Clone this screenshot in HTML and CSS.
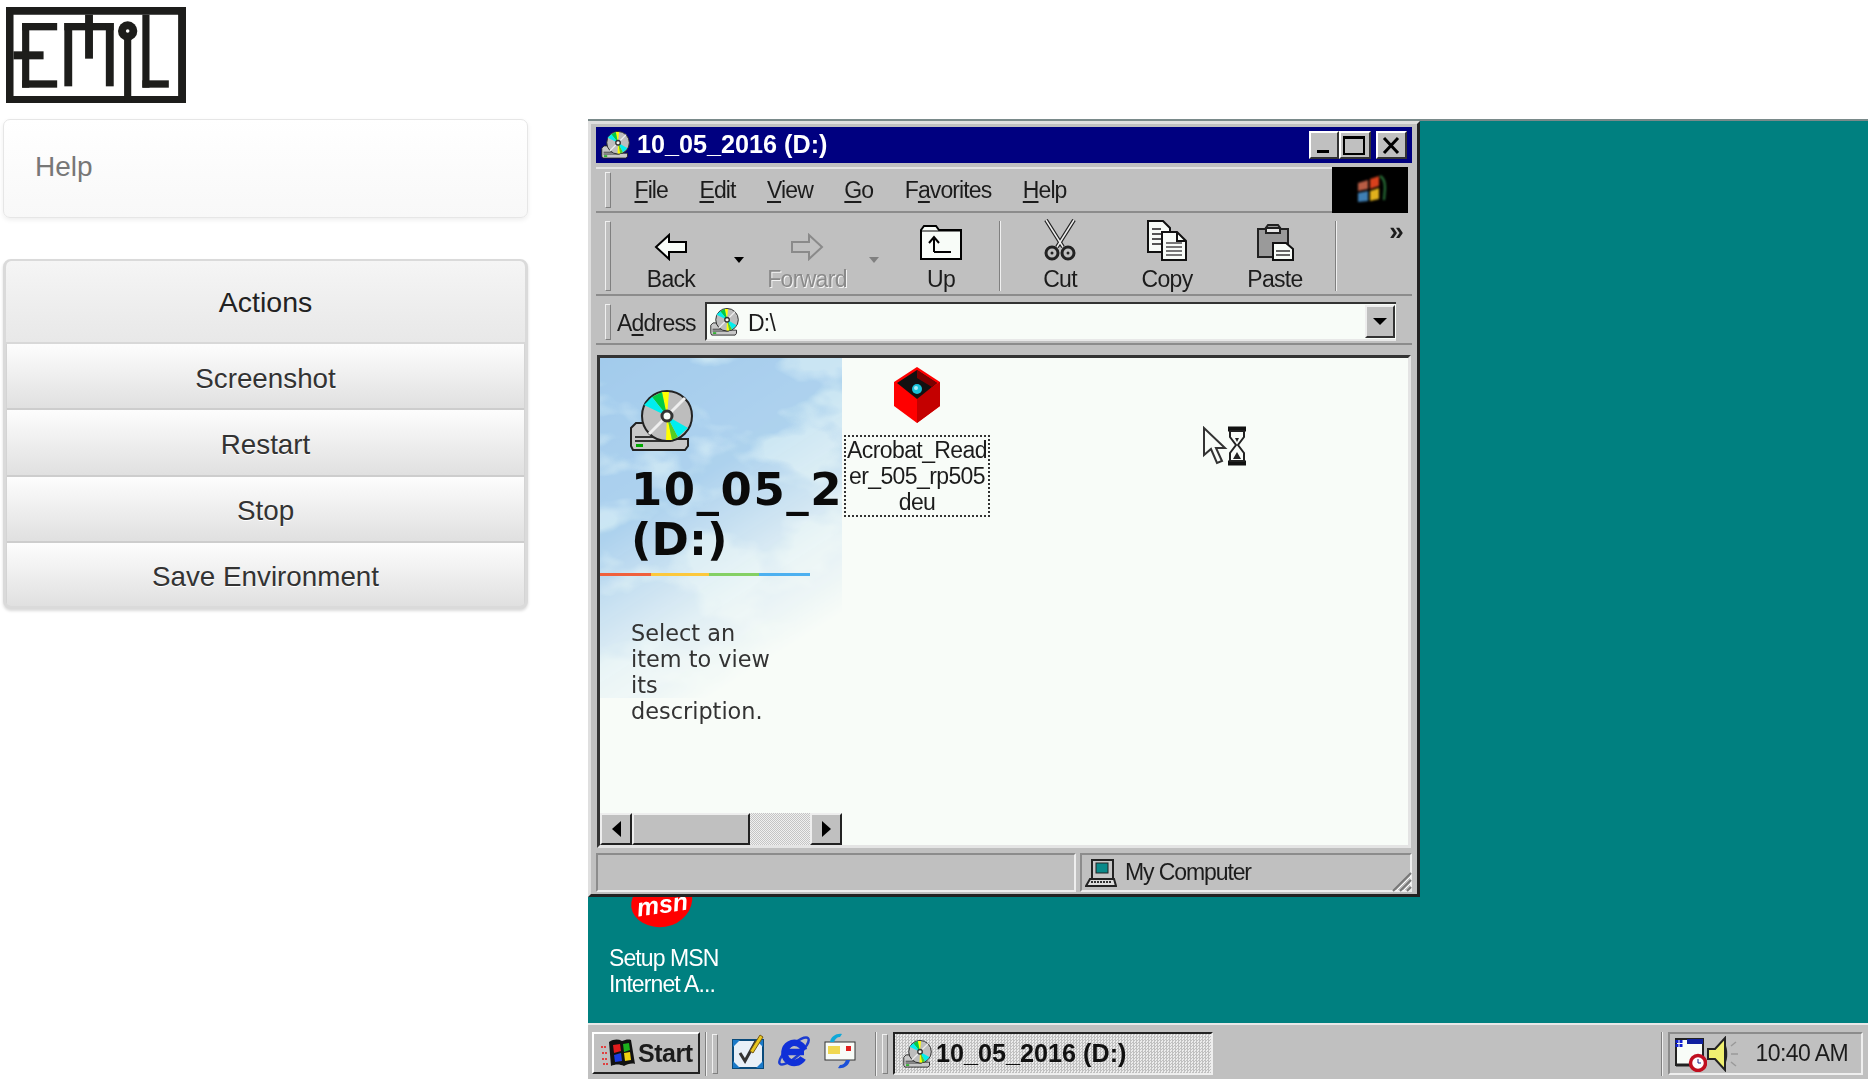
FILE: index.html
```html
<!DOCTYPE html>
<html lang="en">
<head>
    <meta charset="UTF-8">
    <title>EMIL</title>
    <link rel="stylesheet" href="styles.css">
</head>
<body>
    <!-- shared icons -->
    <svg class="defs" width="0" height="0">
        <symbol id="cd-drive" viewBox="0 0 65 62">
            <path d="M6 33h20l20 16h12v7l-3 4H3l-2-4V38z" fill="#c8c8c8" stroke="#222" stroke-width="2"/>
            <path d="M5 47h28M5 51h36" stroke="#333" stroke-width="2"/>
            <rect x="6" y="54" width="7" height="3" fill="#0a0"/>
            <circle cx="37" cy="26" r="25" fill="#bdbdbd" stroke="#222" stroke-width="2"/>
            <path d="M37 26L32 2h7z" fill="#ff0"/>
            <path d="M37 26L22 7l10-5z" fill="#0c4"/>
            <path d="M37 26L14 15l8-8z" fill="#0ee"/>
            <path d="M37 26l5 24h-6z" fill="#ff0"/>
            <path d="M37 26l11 21-6 3z" fill="#5c2"/>
            <path d="M37 26l21 12-10 9z" fill="#0ee"/>
            <path d="M37 26L55 8M37 26L19 44" stroke="#eee" stroke-width="3"/>
            <circle cx="37" cy="26" r="5" fill="#f8fcf8" stroke="#333" stroke-width="3"/>
        </symbol>
    </svg>

    <div class="sidebar">
        <svg class="logo" viewBox="17 20 503 288" preserveAspectRatio="none" fill="#1d1d1b">
            <path fill-rule="evenodd" d="M17 20h503v288H17zM38 43v244h460V43z"/>
            <!-- E -->
            <rect x="62" y="68" width="20" height="194"/>
            <rect x="62" y="68" width="98" height="22"/>
            <rect x="62" y="240" width="98" height="22"/>
            <rect x="38" y="153" width="84" height="24"/>
            <!-- M -->
            <rect x="180" y="68" width="22" height="190"/>
            <rect x="180" y="68" width="138" height="22"/>
            <rect x="238" y="43" width="22" height="132"/>
            <rect x="296" y="68" width="22" height="190"/>
            <!-- I -->
            <rect x="347" y="100" width="20" height="208"/>
            <ellipse cx="357" cy="92" rx="27" ry="29"/>
            <ellipse cx="357" cy="92" rx="5" ry="5" fill="#fff"/>
            <!-- L -->
            <rect x="398" y="43" width="20" height="219"/>
            <rect x="398" y="240" width="74" height="22"/>
        </svg>

        <div class="help-panel">Help</div>

        <div class="actions">
            <div class="actions-title">Actions</div>
            <button class="action-btn">Screenshot</button>
            <button class="action-btn">Restart</button>
            <button class="action-btn">Stop</button>
            <button class="action-btn">Save Environment</button>
        </div>
    </div>

    <div class="screen">
        <div class="desktop">
            <!-- desktop icon, half hidden by the window -->
            <div class="msn-icon">
                <div class="msn-blob">msn</div>
                <div class="msn-label">Setup MSN<br>Internet A...</div>
            </div>

            <div class="window">
                <div class="titlebar">
                    <svg class="title-icon"><use href="#cd-drive"/></svg>
                    <span class="title-text">10_05_2016 (D:)</span>
                    <div class="title-buttons">
                        <div class="win-btn">
                            <svg width="26" height="23"><rect x="6" y="16" width="12" height="3" fill="#000"/></svg>
                        </div>
                        <div class="win-btn">
                            <svg width="28" height="23"><rect x="3" y="3" width="20" height="17" fill="none" stroke="#000" stroke-width="2"/><rect x="3" y="2" width="20" height="3" fill="#000"/></svg>
                        </div>
                        <div class="win-btn win-close">
                            <svg width="27" height="23"><path d="M6 4l14 15M20 4L6 19" stroke="#000" stroke-width="3"/></svg>
                        </div>
                    </div>
                </div>

                <div class="menubar">
                    <div class="menu-items">
                        <div class="grip"></div>
                        <span class="menu-first"><u>F</u>ile</span>
                        <span><u>E</u>dit</span>
                        <span><u>V</u>iew</span>
                        <span><u>G</u>o</span>
                        <span>F<u>a</u>vorites</span>
                        <span><u>H</u>elp</span>
                    </div>
                    <div class="throbber">
                        <svg width="36" height="32" viewBox="0 0 36 32">
                            <path d="M6 9l10-3v9l-10 2z" fill="#b85c44"/>
                            <path d="M18 5l9-3v10l-9 3z" fill="#d8401c"/>
                            <path d="M6 19l10-2v10l-10 1z" fill="#3f7fb4"/>
                            <path d="M18 17l9-3v11l-9 2z" fill="#e0b01c"/>
                            <path d="M28 2c4 2 5 6 5 12l-1 12" fill="none" stroke="#2c7a3c" stroke-width="2"/>
                        </svg>
                    </div>
                </div>

                <div class="toolbar">
                    <div class="grip"></div>
                    <div class="tool tool-back">
                        <svg class="tool-icon" width="34" height="28" viewBox="0 0 34 28"><path d="M2 14L15 2v7h17v10H15v7z" fill="#f8fcf8" stroke="#000" stroke-width="2"/></svg>
                        <span>Back</span>
                    </div>
                    <div class="tool-drop"><i></i></div>
                    <div class="tool tool-forward tool-off">
                        <svg class="tool-icon" width="34" height="28" viewBox="0 0 34 28"><path d="M32 14L19 2v7H2v10h17v7z" fill="#c0c0c0" stroke="#8a8a8a" stroke-width="2"/></svg>
                        <span>Forward</span>
                    </div>
                    <div class="tool-drop tool-drop-off"><i></i></div>
                    <div class="tool tool-up">
                        <svg class="tool-icon" width="42" height="36" viewBox="0 0 42 36"><path d="M1 35V6l3-4h12l3 4h22v29z" fill="#f8fcf8" stroke="#000" stroke-width="2"/><path d="M1 7h40" stroke="#000"/><path d="M14 28V15M14 28h17M9 19l5-6 5 6" fill="none" stroke="#000" stroke-width="2"/></svg>
                        <span>Up</span>
                    </div>
                    <div class="tool-sep"></div>
                    <div class="tool tool-cut">
                        <svg class="tool-icon" width="34" height="42" viewBox="0 0 34 42"><path d="M3 1l17 27M31 1L14 28" fill="none" stroke="#222" stroke-width="4"/><path d="M3 1l17 27M31 1L14 28" fill="none" stroke="#eee" stroke-width="1.5"/><circle cx="9" cy="34" r="6" fill="none" stroke="#222" stroke-width="3"/><circle cx="25" cy="34" r="6" fill="none" stroke="#222" stroke-width="3"/><circle cx="9" cy="34" r="1.5" fill="#222"/><circle cx="25" cy="34" r="1.5" fill="#222"/></svg>
                        <span>Cut</span>
                    </div>
                    <div class="tool tool-copy">
                        <svg class="tool-icon" width="42" height="42" viewBox="0 0 42 42"><path d="M2 2h15l7 7v24H2z" fill="#f8fcf8" stroke="#111" stroke-width="2"/><path d="M6 10h9M6 15h9M6 20h9M6 25h9" stroke="#555" stroke-width="2"/><path d="M16 13h15l9 9v19H16z" fill="#f8fcf8" stroke="#111" stroke-width="2"/><path d="M31 13v9h9" fill="none" stroke="#111" stroke-width="2"/><path d="M20 24h16M20 28h16M20 32h16M20 36h16" stroke="#777" stroke-width="2"/></svg>
                        <span>Copy</span>
                    </div>
                    <div class="tool tool-paste">
                        <svg class="tool-icon" width="40" height="38" viewBox="0 0 40 38"><path d="M3 6h7l3-4h10l3 4h7v28H3z" fill="#9a9a9a" stroke="#222" stroke-width="2"/><path d="M11 5h14v5H11z" fill="#e8e8e8" stroke="#222" stroke-width="2"/><path d="M18 20h13l7 6v11H18z" fill="#f8fcf8" stroke="#111" stroke-width="2"/><path d="M21 28h14M21 32h14" stroke="#666" stroke-width="2"/></svg>
                        <span>Paste</span>
                    </div>
                    <div class="tool-sep"></div>
                    <div class="tool-more">&raquo;</div>
                </div>

                <div class="addressbar">
                    <div class="grip"></div>
                    <span class="address-label">A<u>d</u>dress</span>
                    <div class="address-field">
                        <svg class="address-icon"><use href="#cd-drive"/></svg>
                        <span class="address-text">D:\</span>
                        <div class="address-drop"><i></i></div>
                    </div>
                </div>

                <div class="content">
                    <div class="webview">
                        <svg class="sky" width="242" height="340">
                            <defs>
                                <filter id="clouds" x="0" y="0" width="100%" height="100%">
                                    <feTurbulence type="fractalNoise" baseFrequency=".011 .017" numOctaves="4" seed="8"/>
                                    <feColorMatrix values="0 0 0 0 .36  0 0 0 0 .6  0 0 0 0 .84  6 0 0 0 -2.1"/>
                                </filter>
                                <linearGradient id="sky-fade" x1="0" y1="0" x2=".45" y2="1">
                                    <stop offset="0" stop-color="#fff"/>
                                    <stop offset=".45" stop-color="#ddd"/>
                                    <stop offset=".78" stop-color="#444"/>
                                    <stop offset="1" stop-color="#000"/>
                                </linearGradient>
                                <mask id="sky-mask"><rect width="242" height="340" fill="url(#sky-fade)"/></mask>
                            </defs>
                            <g mask="url(#sky-mask)">
                                <rect width="242" height="340" fill="#c4e2f2"/>
                                <rect width="242" height="340" filter="url(#clouds)"/>
                            </g>
                        </svg>
                        <div class="webview-body">
                            <svg class="drive-big"><use href="#cd-drive"/></svg>
                            <div class="drive-name"><span class="drive-label">10_05_2016</span><br>(D:)</div>
                            <div class="rainbow"><i></i><i></i><i></i><i></i></div>
                            <p class="drive-hint">Select an<br>item to view<br>its<br>description.</p>
                        </div>
                        <div class="scrollbar">
                            <div class="sb-btn"><svg width="12" height="18"><path d="M11 1v16L2 9z" fill="#000"/></svg></div>
                            <div class="sb-thumb"></div>
                            <div class="sb-track"></div>
                            <div class="sb-btn"><svg width="12" height="18"><path d="M2 1v16l9-8z" fill="#000"/></svg></div>
                        </div>
                    </div>
                    <div class="files">
                        <div class="file-item">
                            <svg width="48" height="56" viewBox="0 0 48 56">
                                <path d="M24 0l23 15v24L24 56 1 39V15z" fill="#f00"/>
                                <path d="M24 56l23-17V15L24 30z" fill="#c40000"/>
                                <path d="M24 3l20 13-20 16L4 16z" fill="#111"/>
                                <path d="M24 3l20 13-5 4-15-9z" fill="#7a0000"/>
                                <circle cx="24" cy="22" r="5" fill="#18c0d8"/>
                                <circle cx="23" cy="21" r="2" fill="#a8f0f8"/>
                            </svg>
                            <div class="file-label">Acrobat_Read<br>er_505_rp505<br>deu</div>
                        </div>
                        <!-- mouse pointer of the emulated machine -->
                        <svg class="pointer" width="46" height="40" viewBox="0 0 46 40">
                            <path d="M2 2v27l7-6 6 14 5-2-6-13h9z" fill="#f8fcf8" stroke="#333" stroke-width="2"/>
                            <path d="M26 3h18M26 37h18" stroke="#111" stroke-width="5"/>
                            <path d="M28 5v6l6 8-6 8v8h14v-8l-6-8 6-8V5z" fill="#f8fcf8" stroke="#222" stroke-width="2"/>
                            <path d="M31 33l4-7 4 7zM33 12h4l-2 4z" fill="#222"/>
                        </svg>
                    </div>
                </div>

                <div class="statusbar">
                    <div class="status-cell status-main"></div>
                    <div class="status-cell status-zone">
                        <svg width="32" height="28" viewBox="0 0 32 28">
                            <path d="M7 1h21v19H7z" fill="#c8c8c8" stroke="#222" stroke-width="2"/>
                            <rect x="11" y="4" width="12" height="10" fill="#0a8a8a" stroke="#222"/>
                            <path d="M5 20h24l2 7H1z" fill="#ddd" stroke="#222" stroke-width="2"/>
                            <path d="M6 23h20" stroke="#333" stroke-width="2" stroke-dasharray="2 1"/>
                        </svg>
                        <span>My Computer</span>
                        <svg class="resize-grip" width="22" height="22"><path d="M21 3L3 21M21 10L10 21M21 17l-4 4" stroke="#777" stroke-width="2"/><path d="M21 6L6 21M21 13l-8 8" stroke="#fff"/></svg>
                    </div>
                </div>
            </div>
        </div>

        <div class="taskbar">
            <div class="start-btn">
                <svg width="34" height="30" viewBox="0 0 34 30">
                    <path d="M8 4c5-3 9-3 13-1 3-1 6-2 9-1l4 24c-3-1-8 0-11 2-4-2-9-2-13 0z" fill="#111"/>
                    <path d="M12 7l7-1 1 7-7 2z" fill="#e01c1c"/>
                    <path d="M22 6l6-1 1 7-6 2z" fill="#1cb01c"/>
                    <path d="M13 17l7-2 1 8-7 1z" fill="#1c3ce0"/>
                    <path d="M23 15l6-1 1 8-6 1z" fill="#f0d010"/>
                    <path d="M0 9h6M1 15h6M1 21h6M2 26h6" stroke="#e04040" stroke-width="2" stroke-dasharray="2 1"/>
                </svg>
                <span>Start</span>
            </div>
            <div class="bar-sep"></div>
            <div class="bar-grip"></div>
            <div class="quick">
                <svg width="32" height="36" viewBox="0 0 32 36">
                    <rect x="1" y="7" width="30" height="28" fill="#e8f0f8" stroke="#0a4a7a" stroke-width="2"/>
                    <path d="M1 7l7 0-7 7zM31 35h-7l7-7zM1 35v-7l7 7zM31 7v7l-7-7z" fill="#1c7ac8"/>
                    <path d="M8 20l5 8L24 8" fill="none" stroke="#333" stroke-width="3"/>
                    <path d="M18 18L28 2l3 2-10 16z" fill="#e8c820" stroke="#7a5a10"/>
                </svg>
                <svg width="34" height="38" viewBox="0 0 34 38">
                    <ellipse cx="17" cy="19" rx="19" ry="6" transform="rotate(-42 17 19)" fill="none" stroke="#1c3cd0" stroke-width="2.5"/>
                    <path d="M8 20h19M26 26a10 10 0 1 1 1-8" fill="none" stroke="#1030d8" stroke-width="6.5"/>
                </svg>
                <svg width="32" height="38" viewBox="0 0 32 38">
                    <rect x="1" y="10" width="30" height="18" fill="#f8fcf8" stroke="#333"/>
                    <path d="M4 14h12v8H4z" fill="#f0d850"/>
                    <rect x="22" y="14" width="5" height="5" fill="#e02020"/>
                    <path d="M6 10c1-6 7-9 12-8l-2 3c-3 0-5 2-6 5z" fill="#10a8d8"/>
                    <path d="M26 28c-1 6-7 9-12 8l2-3c3 0 5-2 6-5z" fill="#1c50d8"/>
                </svg>
            </div>
            <div class="bar-sep"></div>
            <div class="bar-grip"></div>
            <div class="task-btn">
                <svg class="task-icon"><use href="#cd-drive"/></svg>
                <span>10_05_2016 (D:)</span>
            </div>
            <div class="tray-sep"></div>
            <div class="tray">
                <svg width="32" height="36" viewBox="0 0 32 36">
                    <rect x="1" y="3" width="27" height="26" fill="#f8fcf8" stroke="#222" stroke-width="2"/>
                    <path d="M12 3h16v5H12z" fill="#1020a0"/>
                    <path d="M2 4v8M6 4v8" stroke="#1020d0" stroke-width="3" stroke-dasharray="3 1"/>
                    <path d="M1 29h14" stroke="#222" stroke-width="3"/>
                    <circle cx="23" cy="27" r="7.5" fill="#fff" stroke="#c01020" stroke-width="3.5"/>
                    <path d="M23 23v4h3" fill="none" stroke="#10208a"/>
                </svg>
                <svg width="32" height="36" viewBox="0 0 32 36">
                    <path d="M1 13h7L18 2v32L8 23H1z" fill="#f0f070" stroke="#222" stroke-width="2"/>
                    <path d="M18 8c3 4 3 16 0 20z" fill="#222"/>
                    <path d="M24 10l5-4M24 18h7M24 26l5 4" stroke="#999" stroke-width="1.5"/>
                </svg>
                <span class="clock">10:40 AM</span>
            </div>
        </div>
    </div>
</body>
</html>
```

FILE: styles.css
```css
html, body {
    margin: 0;
    height: 1083px;
    overflow: hidden;
}
body {
    display: flex;
    font-family: 'Liberation Sans', Arial, sans-serif;
    background: #fff;
    color: #333;
}
.defs {
    position: absolute;
}

/* left column */
.sidebar {
    flex: 0 0 588px;
    box-sizing: border-box;
    padding: 7px 0 0 3px;
}
.logo {
    display: block;
    width: 180px;
    height: 96px;
    margin-left: 3px;
}
.help-panel {
    box-sizing: border-box;
    width: 525px;
    height: 99px;
    margin-top: 16px;
    padding-left: 31px;
    border: 1px solid #e6e6e6;
    border-radius: 7px;
    background: linear-gradient(#fff, #f8f8f8);
    box-shadow: 0 2px 5px rgba(0, 0, 0, 0.07);
    font-size: 28px;
    line-height: 93px;
    color: #777;
}
.actions {
    box-sizing: border-box;
    width: 525px;
    margin-top: 41px;
    border: 3px solid #dadada;
    border-top-width: 2px;
    border-radius: 8px;
    overflow: hidden;
    display: flex;
    flex-direction: column;
    background: #d4d4d4;
    box-shadow: 0 2px 3px rgba(0, 0, 0, 0.15);
}
.actions-title {
    height: 81px;
    line-height: 82px;
    text-align: center;
    font-size: 28.5px;
    color: #222;
    background: linear-gradient(#f5f5f5, #e8e8e8);
    border-bottom: 2px solid #d8d8d8;
}
.action-btn {
    height: 66.25px;
    margin: 0 1px;
    padding: 5px 0 0;
    border: none;
    border-bottom: 2px solid #cdcdcd;
    background: linear-gradient(#fdfdfd, #e0e0e0);
    font-family: 'Liberation Sans', Arial, sans-serif;
    font-size: 27.8px;
    color: #333;
    text-shadow: 0 1px 0 #fff;
}
.action-btn:last-child {
    height: 63px;
    border-bottom: none;
}

/* emulator screen, 1280x960 */
.screen {
    flex: 0 0 1280px;
    height: 960px;
    margin-top: 119px;
    border-top: 2px solid #7a8a8a;
    box-sizing: border-box;
    display: flex;
    flex-direction: column;
    background: #008080;
    filter: blur(0.55px);
    color: #1c1c1c;
}
.desktop {
    flex: 1;
    position: relative;
}
.msn-icon {
    position: absolute;
    left: 21px;
    top: 740px;
    width: 120px;
}
.msn-blob {
    position: absolute;
    left: 22px;
    top: 18px;
    width: 62px;
    height: 48px;
    border-radius: 55% 45% 50% 50% / 50% 40% 60% 50%;
    background: #f00;
    color: #fff;
    font-weight: bold;
    font-style: italic;
    font-size: 25px;
    line-height: 50px;
    text-align: center;
    transform: rotate(-8deg);
}
.msn-label {
    position: absolute;
    top: 84px;
    left: 0;
    white-space: nowrap;
    font-size: 23px;
    line-height: 26px;
    letter-spacing: -0.9px;
    color: #fff;
}

/* window */
.window {
    position: absolute;
    left: 0;
    top: 0;
    width: 832px;
    height: 776px;
    box-sizing: border-box;
    padding: 3px 5px 2px;
    display: flex;
    flex-direction: column;
    background: #c0c0c0;
    border: 3px solid;
    border-color: #dfdfdf #222 #222 #dfdfdf;
}
.titlebar {
    height: 36px;
    flex: none;
    display: flex;
    align-items: center;
    padding: 0 5px 0 5px;
    background: #000080;
    color: #fff;
}
.title-icon {
    width: 30px;
    height: 28px;
    margin-right: 6px;
}
.title-text {
    margin-top: -2px;
    font-size: 25.2px;
    font-weight: bold;
}
.title-buttons {
    margin-left: auto;
    display: flex;
}
.win-btn {
    box-sizing: border-box;
    height: 28px;
    display: flex;
    align-items: center;
    justify-content: center;
    background: #c0c0c0;
    border: 2px solid;
    border-color: #fff #333 #333 #fff;
}
.win-btn svg {
    display: block;
}
.win-close {
    margin-left: 5px;
}

.menubar {
    height: 46px;
    flex: none;
    margin-top: 4px;
    display: flex;
    font-size: 23px;
    letter-spacing: -0.9px;
}
.menu-items {
    flex: 1;
    display: flex;
    align-items: center;
    gap: 31.5px;
    border-top: 2px solid #e4e4e4;
    border-bottom: 2px solid #8c8c8c;
}
.menu-items span.menu-first {
    margin-left: -8px;
}
.grip {
    flex: none;
    width: 4px;
    height: 34px;
    margin-left: 9px;
    background: #c0c0c0;
    border: 1px solid;
    border-color: #f0f0f0 #808080 #808080 #f0f0f0;
}
u {
    text-underline-offset: 3px;
}
.throbber {
    flex: none;
    width: 76px;
    margin-right: 4px;
    background: #000;
    display: flex;
    align-items: center;
    justify-content: center;
}
.throbber svg {
    filter: blur(0.8px);
}

.toolbar {
    height: 79px;
    flex: none;
    margin-top: 4px;
    display: flex;
    align-items: center;
    border-bottom: 2px solid #8c8c8c;
    box-sizing: border-box;
    font-size: 23px;
    letter-spacing: -0.7px;
}
.toolbar .grip {
    height: 68px;
    margin-right: 5px;
}
.tool {
    flex: none;
    height: 77px;
    display: flex;
    flex-direction: column;
    align-items: center;
}
.tool-icon {
    margin-top: auto;
}
.tool span {
    flex: none;
    height: 29px;
    margin-top: 4px;
    line-height: 28px;
}
.tool-back {
    width: 110px;
}
.tool-forward {
    width: 110px;
}
.tool-up {
    width: 112px;
}
.tool-up .tool-icon {
    margin-bottom: 1px;
}
.tool-cut {
    width: 114px;
}
.tool-copy {
    width: 100px;
}
.tool-paste {
    width: 116px;
}
.tool-off {
    color: #8a8a8a;
    text-shadow: 1px 1px 0 #f4f4f4;
}
.tool-drop {
    flex: none;
    width: 26px;
    display: flex;
    justify-content: center;
    margin-top: 8px;
}
.tool-drop i {
    border-left: 5px solid transparent;
    border-right: 5px solid transparent;
    border-top: 6px solid #000;
}
.tool-drop-off {
    width: 23px;
}
.tool-drop-off i {
    border-top-color: #808080;
}
.tool-sep {
    flex: none;
    width: 1px;
    height: 70px;
    margin: 0 2px;
    background: #808080;
    border-right: 1px solid #f0f0f0;
}
.tool-more {
    flex: 1;
    align-self: flex-start;
    margin-top: 1px;
    padding-right: 9px;
    text-align: right;
    font-size: 26px;
    font-weight: bold;
    line-height: 26px;
}

.addressbar {
    height: 45px;
    flex: none;
    margin-top: 4px;
    display: flex;
    align-items: center;
    border-bottom: 2px solid #8c8c8c;
    box-sizing: border-box;
    font-size: 23px;
    letter-spacing: -0.8px;
}
.address-label {
    margin: 3px 0 0 6px;
    width: 88px;
}
.address-field {
    box-sizing: border-box;
    width: 691px;
    height: 39px;
    display: flex;
    align-items: center;
    background: #f8fcf8;
    border-top: 2px solid #333;
    border-left: 2px solid #333;
    border-bottom: 2px solid #e8e8e8;
}
.address-icon {
    width: 30px;
    height: 28px;
    margin: 0 8px 0 3px;
}
.address-text {
    margin-top: 3px;
}
.address-drop {
    margin-left: auto;
    box-sizing: border-box;
    width: 30px;
    height: 33px;
    margin-right: 1px;
    display: flex;
    align-items: center;
    justify-content: center;
    background: #c0c0c0;
    border: 2px solid;
    border-color: #eee #333 #333 #eee;
}
.address-drop i {
    border-left: 7px solid transparent;
    border-right: 7px solid transparent;
    border-top: 7px solid #000;
}

.content {
    flex: 1;
    min-height: 0;
    margin: 10px 1px 0;
    display: flex;
    background: #f8fcf8;
    border: 3px solid;
    border-color: #333 #e4e4e4 #e4e4e4 #333;
}
.webview {
    flex: none;
    width: 242px;
    position: relative;
    display: flex;
    flex-direction: column;
}
.sky {
    position: absolute;
    left: 0;
    top: 0;
}
.webview-body {
    flex: 1;
    min-height: 0;
    position: relative;
    overflow: hidden;
    padding-top: 32px;
}
.drive-big {
    display: block;
    width: 65px;
    height: 62px;
    margin-left: 30px;
}
.drive-name {
    margin: 13px 0 0 31px;
    white-space: nowrap;
    font-family: 'DejaVu Sans', Verdana, sans-serif;
    font-weight: bold;
    font-size: 45px;
    line-height: 50px;
    color: #0a0a0a;
}
.drive-label {
    letter-spacing: 1.5px;
}
.rainbow {
    display: flex;
    height: 3px;
    width: 210px;
    margin-top: 8px;
}
.rainbow i {
    flex: 1;
    background: #f0603c;
}
.rainbow i:nth-child(2) {
    flex: 1.15;
    background: #fcc83c;
}
.rainbow i:nth-child(3) {
    background: #84d064;
}
.rainbow i:nth-child(4) {
    background: #4cb0f0;
}
.drive-hint {
    margin: 44px 0 0 31px;
    font-family: 'DejaVu Sans', Verdana, sans-serif;
    font-size: 22.4px;
    line-height: 26px;
    color: #333;
}
.scrollbar {
    flex: none;
    height: 32px;
    position: relative;
    display: flex;
    background: #f8fcf8;
}
.sb-btn, .sb-thumb {
    box-sizing: border-box;
    background: #c0c0c0;
    border: 2px solid;
    border-color: #eee #222 #222 #eee;
}
.sb-btn {
    flex: none;
    width: 32px;
    display: flex;
    align-items: center;
    justify-content: center;
}
.sb-thumb {
    flex: none;
    width: 118px;
}
.sb-track {
    flex: 1;
    background: repeating-conic-gradient(#c4c4c4 0 25%, #f0f0f0 0 50%) 0 0 / 2px 2px;
}

.files {
    flex: 1;
    position: relative;
}
.file-item {
    width: 146px;
    margin: 9px 0 0 2px;
    display: flex;
    flex-direction: column;
    align-items: center;
}
.file-label {
    box-sizing: border-box;
    width: 146px;
    height: 82px;
    margin-top: 12px;
    border: 2px dotted #333;
    text-align: center;
    font-size: 23px;
    line-height: 26px;
    letter-spacing: -0.6px;
}
.pointer {
    position: absolute;
    left: 360px;
    top: 68px;
}

.statusbar {
    height: 39px;
    flex: none;
    margin-top: 5px;
    display: flex;
    gap: 4px;
    font-size: 23px;
    letter-spacing: -1.1px;
}
.status-cell {
    box-sizing: border-box;
    display: flex;
    align-items: center;
    border: 2px solid;
    border-color: #8c8c8c #eee #eee #8c8c8c;
}
.status-main {
    flex: 0 0 480px;
}
.status-zone {
    flex: 1;
    position: relative;
    padding-left: 3px;
    gap: 8px;
}
.resize-grip {
    position: absolute;
    right: -2px;
    bottom: -2px;
}

/* taskbar */
.taskbar {
    flex: none;
    height: 56px;
    box-sizing: border-box;
    padding: 7px 5px 0 4px;
    display: flex;
    align-items: flex-start;
    background: #c0c0c0;
    border-top: 2px solid #e8e8e8;
}
.start-btn {
    box-sizing: border-box;
    width: 108px;
    height: 42px;
    display: flex;
    align-items: center;
    gap: 3px;
    padding-left: 7px;
    border: 2px solid;
    border-color: #fff #222 #222 #fff;
    font-size: 25px;
    font-weight: bold;
    letter-spacing: -0.5px;
}
.bar-sep {
    flex: none;
    width: 1px;
    height: 44px;
    margin-left: 5px;
    background: #808080;
    border-right: 1px solid #f0f0f0;
}
.bar-grip {
    flex: none;
    width: 4px;
    height: 38px;
    margin: 2px 0 0 5px;
    border: 1px solid;
    border-color: #f0f0f0 #808080 #808080 #f0f0f0;
}
.quick {
    flex: none;
    width: 152px;
    box-sizing: border-box;
    padding-left: 14px;
    display: flex;
    align-items: center;
    gap: 13px;
}
.task-btn {
    box-sizing: border-box;
    width: 320px;
    height: 43px;
    margin-left: 5px;
    display: flex;
    align-items: center;
    gap: 3px;
    padding-left: 8px;
    border: 2px solid;
    border-color: #222 #eee #eee #222;
    background: repeating-conic-gradient(#c0c0c0 0 25%, #ececec 0 50%) 0 0 / 3px 3px;
    font-size: 25.2px;
    font-weight: bold;
    color: #111;
}
.task-icon {
    width: 30px;
    height: 28px;
}
.tray-sep {
    flex: none;
    width: 1px;
    height: 44px;
    margin-left: auto;
    margin-right: 5px;
    background: #808080;
    border-right: 1px solid #f0f0f0;
}
.tray {
    box-sizing: border-box;
    width: 195px;
    height: 43px;
    display: flex;
    align-items: center;
    padding-left: 5px;
    border: 2px solid;
    border-color: #8c8c8c #eee #eee #8c8c8c;
}
.clock {
    margin-left: auto;
    padding-right: 13px;
    font-size: 23px;
    letter-spacing: -0.6px;
}
```
